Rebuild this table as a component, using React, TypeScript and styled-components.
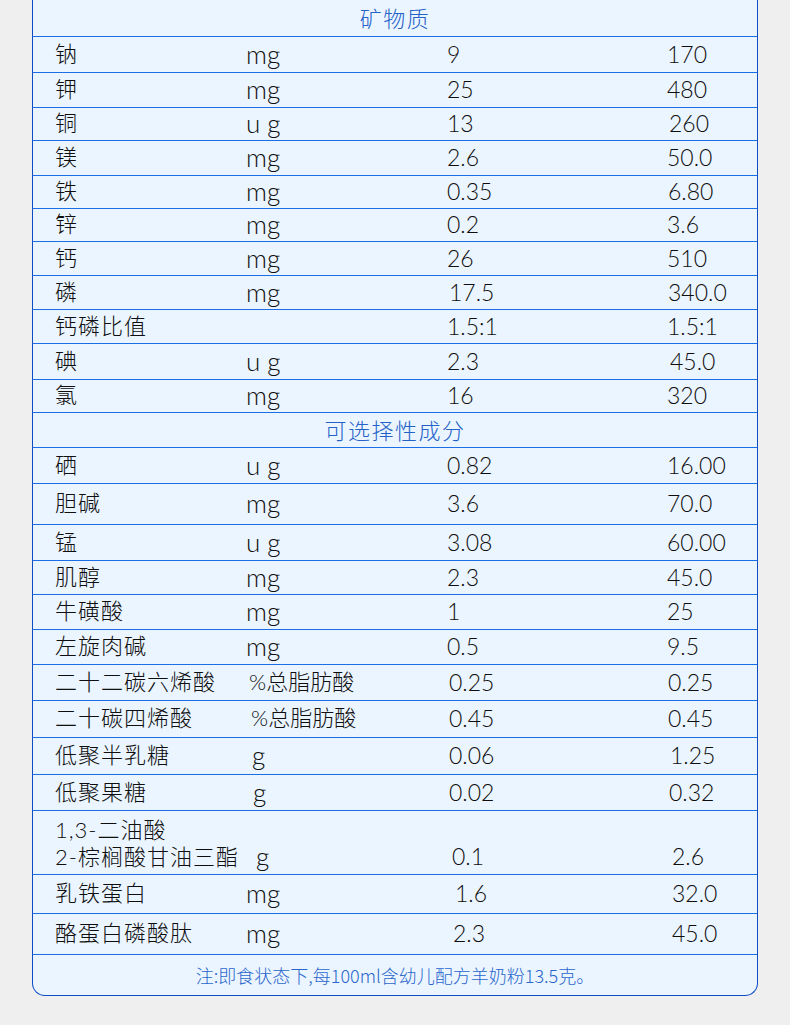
import styled, { createGlobalStyle } from "styled-components";

type Item = {
  name: string;
  unit?: string;
  v1: string;
  v2: string;
  h: number;
  s?: [number, number, number];
};

type Section = { title: string; h: number; items: Item[] };

const sections: Section[] = [
  {
    title: "矿物质",
    h: 37,
    items: [
      { name: "钠", unit: "mg", v1: "9", v2: "170", h: 36 },
      { name: "钾", unit: "mg", v1: "25", v2: "480", h: 35 },
      { name: "铜", unit: "u g", v1: "13", v2: "260", h: 33, s: [0, 0, 2] },
      { name: "镁", unit: "mg", v1: "2.6", v2: "50.0", h: 35 },
      { name: "铁", unit: "mg", v1: "0.35", v2: "6.80", h: 33, s: [0, 0, 1] },
      { name: "锌", unit: "mg", v1: "0.2", v2: "3.6", h: 33 },
      { name: "钙", unit: "mg", v1: "26", v2: "510", h: 34, s: [0, 0, -1] },
      { name: "磷", unit: "mg", v1: "17.5", v2: "340.0", h: 34, s: [0, 2, 1] },
      { name: "钙磷比值", v1: "1.5:1", v2: "1.5:1", h: 34, s: [0, -1, 0] },
      { name: "碘", unit: "u g", v1: "2.3", v2: "45.0", h: 36, s: [0, -2, 3] },
      { name: "氯", unit: "mg", v1: "16", v2: "320", h: 33, s: [0, 0, -1] },
    ],
  },
  {
    title: "可选择性成分",
    h: 35,
    items: [
      { name: "硒", unit: "u g", v1: "0.82", v2: "16.00", h: 36, s: [0, -2, 0] },
      { name: "胆碱", unit: "mg", v1: "3.6", v2: "70.0", h: 41, s: [-1, -1, -1] },
      { name: "锰", unit: "u g", v1: "3.08", v2: "60.00", h: 36, s: [0, -2, -1] },
      { name: "肌醇", unit: "mg", v1: "2.3", v2: "45.0", h: 34 },
      { name: "牛磺酸", unit: "mg", v1: "1", v2: "25", h: 35, s: [0, 0, -2] },
      { name: "左旋肉碱", unit: "mg", v1: "0.5", v2: "9.5", h: 35 },
      { name: "二十二碳六烯酸", unit: "%总脂肪酸", v1: "0.25", v2: "0.25", h: 36, s: [3, 2, 1] },
      { name: "二十碳四烯酸", unit: "%总脂肪酸", v1: "0.45", v2: "0.45", h: 37, s: [5, 2, 1] },
      { name: "低聚半乳糖", unit: "g", v1: "0.06", v2: "1.25", h: 37, s: [6, 2, 3] },
      { name: "低聚果糖", unit: "g", v1: "0.02", v2: "0.32", h: 36, s: [7, 2, 2] },
      { name: "1,3-二油酸\n2-棕榈酸甘油三酯", unit: "g", v1: "0.1", v2: "2.6", h: 64, s: [10, 5, 5] },
      { name: "乳铁蛋白", unit: "mg", v1: "1.6", v2: "32.0", h: 39, s: [0, 8, 5] },
      { name: "酪蛋白磷酸肽", unit: "mg", v1: "2.3", v2: "45.0", h: 41, s: [0, 6, 5] },
    ],
  },
];

const GlobalStyle = createGlobalStyle`
  html, body {
    margin: 0;
    padding: 0;
    background: #efefef;
  }
  body {
    font-family: Lato, "Noto Sans CJK SC", sans-serif;
    font-weight: 300;
    color: #0e0e0e;
  }
`;

const App = () => {
  return (
    <>
      <GlobalStyle />
      <Panel>
        {sections.map((sec) => (
          <div key={sec.title}>
            <Title $h={sec.h}>{sec.title}</Title>
            {sec.items.map((it) => {
              const s = it.s ?? [0, 0, 0];
              const multi = it.name.includes("\n");
              const latinUnit = !!it.unit && /^[a-z ]+$/.test(it.unit);
              return (
                <Row key={it.name} $h={it.h} $multi={multi}>
                  <Name>
                    {it.name.split("\n").map((l) => (
                      <span key={l}>{l}</span>
                    ))}
                  </Name>
                  <Unit $shift={s[0]} $latin={latinUnit}>
                    {it.unit ?? ""}
                  </Unit>
                  <Cell $shift={s[1]}>{it.v1}</Cell>
                  <Cell $shift={s[2]}>{it.v2}</Cell>
                </Row>
              );
            })}
          </div>
        ))}
        <Footer>注:即食状态下,每100ml含幼儿配方羊奶粉13.5克。</Footer>
      </Panel>
    </>
  );
};

export default App;

const Panel = styled.div`
  width: 726px;
  box-sizing: border-box;
  margin: 0 auto;
  background: #ebf5ff;
  border-left: 1px solid #0d4cc4;
  border-right: 1px solid #0d4cc4;
  border-bottom: 1px solid #0d4cc4;
  border-radius: 0 0 13px 13px;
  overflow: hidden;
`;

const Title = styled.div<{ $h: number }>`
  height: ${(p) => p.$h}px;
  box-sizing: border-box;
  border-bottom: 1px solid #1b6fe6;
  padding-bottom: 2px;
  display: flex;
  align-items: center;
  justify-content: center;
  font-family: "Noto Sans CJK SC", sans-serif;
  font-size: 22px;
  line-height: 24px;
  letter-spacing: 1.5px;
  color: #2462c8;
`;

const Row = styled.div<{ $h: number; $multi: boolean }>`
  height: ${(p) => p.$h}px;
  box-sizing: border-box;
  border-bottom: 1px solid #1b6fe6;
  display: grid;
  grid-template-columns: 191px 201px 220px 1fr;
  align-items: ${(p) => (p.$multi ? "end" : "center")};
  padding: ${(p) => (p.$multi ? "5px 0 4px 22px" : "0 0 2px 22px")};
  font-size: 22px;
  line-height: ${(p) => (p.$multi ? "27px" : "24px")};
`;

const Name = styled.div`
  display: flex;
  flex-direction: column;
  letter-spacing: 1px;
  white-space: nowrap;
`;

const Cell = styled.div<{ $shift: number }>`
  padding-left: ${(p) => p.$shift}px;
  white-space: nowrap;
  font-size: 23px;
`;

const Unit = styled(Cell)<{ $latin: boolean }>`
  font-size: ${(p) => (p.$latin ? "26px" : "22px")};
`;

const Footer = styled.div`
  height: 40px;
  display: flex;
  align-items: center;
  justify-content: center;
  font-family: "Noto Sans CJK SC", sans-serif;
  font-size: 18px;
  color: #2a66cc;
`;
